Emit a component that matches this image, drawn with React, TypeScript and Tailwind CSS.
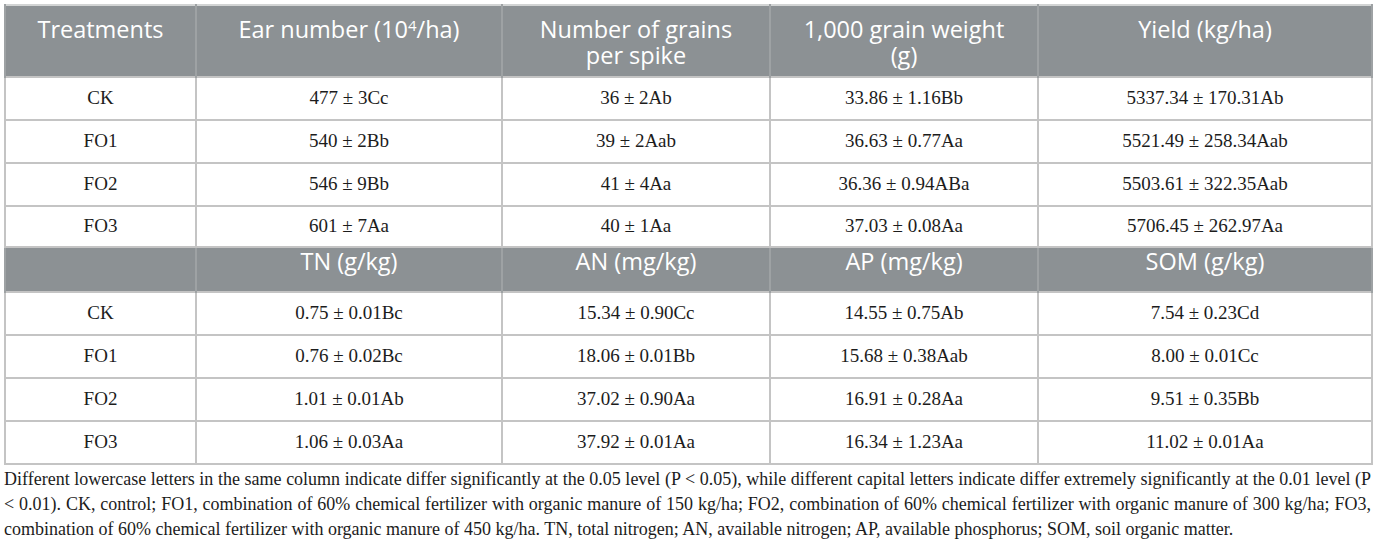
import React from "react";

const sans = { fontFamily: '"Open Sans", "Noto Sans", sans-serif' };

type Row = [string, string, string, string, string];

const rows1: Row[] = [
  ["CK", "477 ± 3Cc", "36 ± 2Ab", "33.86 ± 1.16Bb", "5337.34 ± 170.31Ab"],
  ["FO1", "540 ± 2Bb", "39 ± 2Aab", "36.63 ± 0.77Aa", "5521.49 ± 258.34Aab"],
  ["FO2", "546 ± 9Bb", "41 ± 4Aa", "36.36 ± 0.94ABa", "5503.61 ± 322.35Aab"],
  ["FO3", "601 ± 7Aa", "40 ± 1Aa", "37.03 ± 0.08Aa", "5706.45 ± 262.97Aa"],
];

const rows2: Row[] = [
  ["CK", "0.75 ± 0.01Bc", "15.34 ± 0.90Cc", "14.55 ± 0.75Ab", "7.54 ± 0.23Cd"],
  ["FO1", "0.76 ± 0.02Bc", "18.06 ± 0.01Bb", "15.68 ± 0.38Aab", "8.00 ± 0.01Cc"],
  ["FO2", "1.01 ± 0.01Ab", "37.02 ± 0.90Aa", "16.91 ± 0.28Aa", "9.51 ± 0.35Bb"],
  ["FO3", "1.06 ± 0.03Aa", "37.92 ± 0.01Aa", "16.34 ± 1.23Aa", "11.02 ± 0.01Aa"],
];

function BodyRow({ r, h }: { r: Row; h: string }) {
  return (
    <tr className={h}>
      {r.map((c, i) => (
        <td
          key={i}
          className="border-2 border-[#c4c4c4] text-center align-middle text-[19px] text-[#1c1c1c] p-0"
        >
          {c}
        </td>
      ))}
    </tr>
  );
}

export default function App() {
  const th =
    "border-x-2 border-[#9ea2a4] bg-[#8c9194] text-white text-[23.5px] leading-[26px] font-normal text-center align-top p-0";
  return (
    <div
      className="bg-white w-[1375px] h-[544px] pl-[4px] pt-[4px]"
      style={{ fontFamily: '"Liberation Serif", "Times New Roman", serif' }}
    >
      <table className="table-fixed border-collapse w-[1367px] border-2 border-[#c8cfc8]">
        <colgroup>
          <col className="w-[191px]" />
          <col className="w-[306px]" />
          <col className="w-[268px]" />
          <col className="w-[268px]" />
          <col className="w-[334px]" />
        </colgroup>
        <thead>
          <tr className="h-[72px] border-t-2 border-[#d2d4d4]" style={sans}>
            <th className={th + " pt-[10px]"}>Treatments</th>
            <th className={th + " pt-[10px]"}>
              Ear number (10<sup className="text-[15px]">4</sup>/ha)
            </th>
            <th className={th + " pt-[10px]"}>
              Number of grains
              <br />
              per spike
            </th>
            <th className={th + " pt-[10px]"}>
              1,000 grain weight
              <br />
              (g)
            </th>
            <th className={th + " pt-[10px]"}>Yield (kg/ha)</th>
          </tr>
        </thead>
        <tbody>
          {rows1.map((r, i) => (
            <BodyRow key={i} r={r} h={i === 3 ? "h-[41px]" : "h-[43px]"} />
          ))}
          <tr className="h-[45px]" style={sans}>
            <th className={th}></th>
            <th className={th}>TN (g/kg)</th>
            <th className={th}>AN (mg/kg)</th>
            <th className={th}>AP (mg/kg)</th>
            <th className={th}>SOM (g/kg)</th>
          </tr>
          {rows2.map((r, i) => (
            <BodyRow key={i} r={r} h="h-[43px]" />
          ))}
        </tbody>
      </table>
      <p className="w-[1367px] mt-[2px] text-[18px] leading-[25px] text-[#1c1c1c] text-justify">
        Different lowercase letters in the same column indicate differ significantly at the 0.05 level (P &lt; 0.05),
        while different capital letters indicate differ extremely significantly at the 0.01 level (P &lt; 0.01). CK,
        control; FO1, combination of 60% chemical fertilizer with organic manure of 150 kg/ha; FO2, combination of 60%
        chemical fertilizer with organic manure of 300 kg/ha; FO3, combination of 60% chemical fertilizer with organic
        manure of 450 kg/ha. TN, total nitrogen; AN, available nitrogen; AP, available phosphorus; SOM, soil organic
        matter.
      </p>
    </div>
  );
}
